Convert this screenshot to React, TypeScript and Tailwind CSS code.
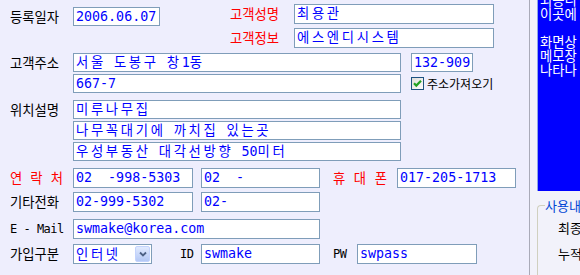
const HANGUL = /([\uac00-\ud7a3]+)/;

function Val({ text }: { text: string }) {
  return (
    <span className="whitespace-pre font-['DejaVu_Sans_Mono','Noto_Sans_CJK_KR',monospace] text-[13.33px] leading-none text-[#0000ff]">
      {text.split(HANGUL).map((part, i) =>
        i % 2 === 1 ? (
          <span key={i} className="tracking-[2.67px]">
            {part}
          </span>
        ) : (
          part
        )
      )}
    </span>
  );
}

function Field({ className, value }: { className: string; value: string }) {
  return (
    <div className={`flex shrink-0 items-center overflow-hidden border border-[#7f9db9] bg-white pl-[2px] ${className}`}>
      <Val text={value} />
    </div>
  );
}

function Label({ text, red, className = 'w-[63px]' }: { text: string; red?: boolean; className?: string }) {
  return (
    <div className={`shrink-0 text-[13.33px] leading-none ${red ? 'text-[#ff0000]' : 'text-black'} ${className}`}>
      {text}
    </div>
  );
}

// labels like "연 락 처" are spread over the full label width
function Spread({ parts, red, className }: { parts: string[]; red?: boolean; className: string }) {
  return (
    <div className={`flex shrink-0 justify-between leading-none ${red ? 'text-[#ff0000]' : 'text-black'} ${className}`}>
      {parts.map((p) => (
        <span key={p}>{p}</span>
      ))}
    </div>
  );
}

function MonoLabel({ text, className }: { text: string; className: string }) {
  return (
    <div className={`shrink-0 whitespace-pre font-['DejaVu_Sans_Mono',monospace] text-[12px] leading-none tracking-[-0.5px] text-black ${className}`}>
      {text}
    </div>
  );
}

function Checkbox() {
  return (
    <svg width="13" height="13" viewBox="0 0 13 13" className="shrink-0">
      <defs>
        <linearGradient id="cbg" x1="0" y1="0" x2="1" y2="1">
          <stop offset="0" stopColor="#dcdcd7" />
          <stop offset="1" stopColor="#ffffff" />
        </linearGradient>
      </defs>
      <rect x="0.5" y="0.5" width="12" height="12" fill="url(#cbg)" stroke="#1c5180" />
      <path d="M3 6.2 L5.3 8.6 L10 3.8" fill="none" stroke="#21a121" strokeWidth="2.2" />
    </svg>
  );
}

function Select({ value }: { value: string }) {
  return (
    <div className="flex h-[20px] w-[79px] shrink-0 items-center border border-[#7f9db9] bg-white pl-[2px]">
      <div className="flex-1">
        <Val text={value} />
      </div>
      <div className="mr-[1px] flex h-[16px] w-[15px] items-center justify-center rounded-[2px] border border-[#c3d3fd] bg-gradient-to-b from-[#e1eafe] to-[#b4c8f5]">
        <svg width="8" height="6" viewBox="0 0 8 6">
          <path d="M1 1.5 L4 4.5 L7 1.5" fill="none" stroke="#4d6185" strokeWidth="1.8" />
        </svg>
      </div>
    </div>
  );
}

export default function App() {
  return (
    <div className="flex h-[275px] w-[580px] overflow-hidden bg-[#eeeefd] font-['Noto_Sans_CJK_KR',sans-serif] text-[13.33px]">
      <div className="flex w-[529px] shrink-0 flex-col pl-[10px] pt-[4px]">
        {/* 등록일자 / 고객성명 / 고객정보 */}
        <div className="flex items-start">
          <div className="mt-[3px] flex items-center">
            <Label text="등록일자" />
            <Field className="h-[19px] w-[87px]" value="2006.06.07" />
          </div>
          <div className="ml-[70px] flex flex-col gap-[4px]">
            <div className="flex items-center">
              <Label text="고객성명" red className="w-[64px]" />
              <Field className="h-[20px] w-[200px]" value="최용관" />
            </div>
            <div className="flex items-center">
              <Label text="고객정보" red className="w-[64px]" />
              <Field className="h-[20px] w-[200px]" value="에스엔디시스템" />
            </div>
          </div>
        </div>

        {/* 고객주소 */}
        <div className="mt-[5px] flex items-center">
          <Label text="고객주소" />
          <Field className="h-[19px] w-[328px]" value="서울 도봉구 창1동" />
          <Field className="ml-[10px] h-[19px] w-[62px]" value="132-909" />
        </div>
        <div className="mt-[2px] flex items-center pl-[63px]">
          <Field className="h-[19px] w-[328px]" value="667-7" />
          <div className="ml-[10px] flex items-center">
            <Checkbox />
            <span className="ml-[3px] text-[12px] leading-none text-black">주소가져오기</span>
          </div>
        </div>

        {/* 위치설명 */}
        <div className="mt-[7px] flex items-start">
          <div className="flex h-[19px] items-center">
            <Label text="위치설명" />
          </div>
          <div className="flex flex-col gap-[2px]">
            <Field className="h-[19px] w-[328px]" value="미루나무집" />
            <Field className="h-[19px] w-[328px]" value="나무꼭대기에 까치집 있는곳" />
            <Field className="h-[19px] w-[328px]" value="우성부동산 대각선방향 50미터" />
          </div>
        </div>

        {/* 연락처 */}
        <div className="mt-[7px] flex items-center">
          <Spread parts={['연', '락', '처']} red className="mr-[10px] w-[53px]" />
          <Field className="h-[20px] w-[120px]" value="02  -998-5303" />
          <Field className="ml-[8px] h-[20px] w-[119px]" value="02  -" />
          <Spread parts={['휴', '대', '폰']} red className="ml-[13px] mr-[10px] w-[54px]" />
          <Field className="h-[20px] w-[119px]" value="017-205-1713" />
        </div>

        <div className="mt-[4px] flex items-center">
          <Label text="기타전화" />
          <Field className="h-[20px] w-[120px]" value="02-999-5302" />
          <Field className="ml-[8px] h-[20px] w-[119px]" value="02-" />
        </div>

        <div className="mt-[7px] flex items-center">
          <MonoLabel text="E - Mail" className="w-[63px]" />
          <Field className="h-[20px] w-[247px]" value="swmake@korea.com" />
        </div>

        <div className="mt-[5px] flex items-center">
          <Label text="가입구분" />
          <Select value="인터넷" />
          <MonoLabel text="ID" className="ml-[28px] w-[21px]" />
          <Field className="h-[20px] w-[119px]" value="swmake" />
          <MonoLabel text="PW" className="ml-[13px] w-[24px]" />
          <Field className="h-[20px] w-[120px]" value="swpass" />
        </div>
      </div>

      {/* right column: memo panel and usage group */}
      <div className="flex min-w-0 flex-1 flex-col border-l border-[#a9aab8] bg-[#f2f2fa] pl-[7px]">
        <div className="h-[191px] overflow-hidden border-l border-[#8ea6e6] bg-[#0000ff] pl-[2px] text-[13.33px] leading-[14px] whitespace-nowrap text-white">
          <div className="-mt-[7px]">
            <div>되용니</div>
            <div>이곳에</div>
            <div>&nbsp;</div>
            <div>화면상</div>
            <div>메모장</div>
            <div>나타나</div>
          </div>
        </div>
        <fieldset className="mt-[8px] flex-1 whitespace-nowrap rounded-tl-[4px] border border-r-0 border-b-0 border-[#d0d0bf]">
          <legend className="ml-[7px] text-[13px] leading-[13px] text-[#0046d5]">사용내</legend>
          <div className="flex flex-col gap-[13px] pl-[20px] pt-[9px] text-[13px] leading-[13px] text-black">
            <div>최종</div>
            <div>누적</div>
          </div>
        </fieldset>
      </div>
    </div>
  );
}
